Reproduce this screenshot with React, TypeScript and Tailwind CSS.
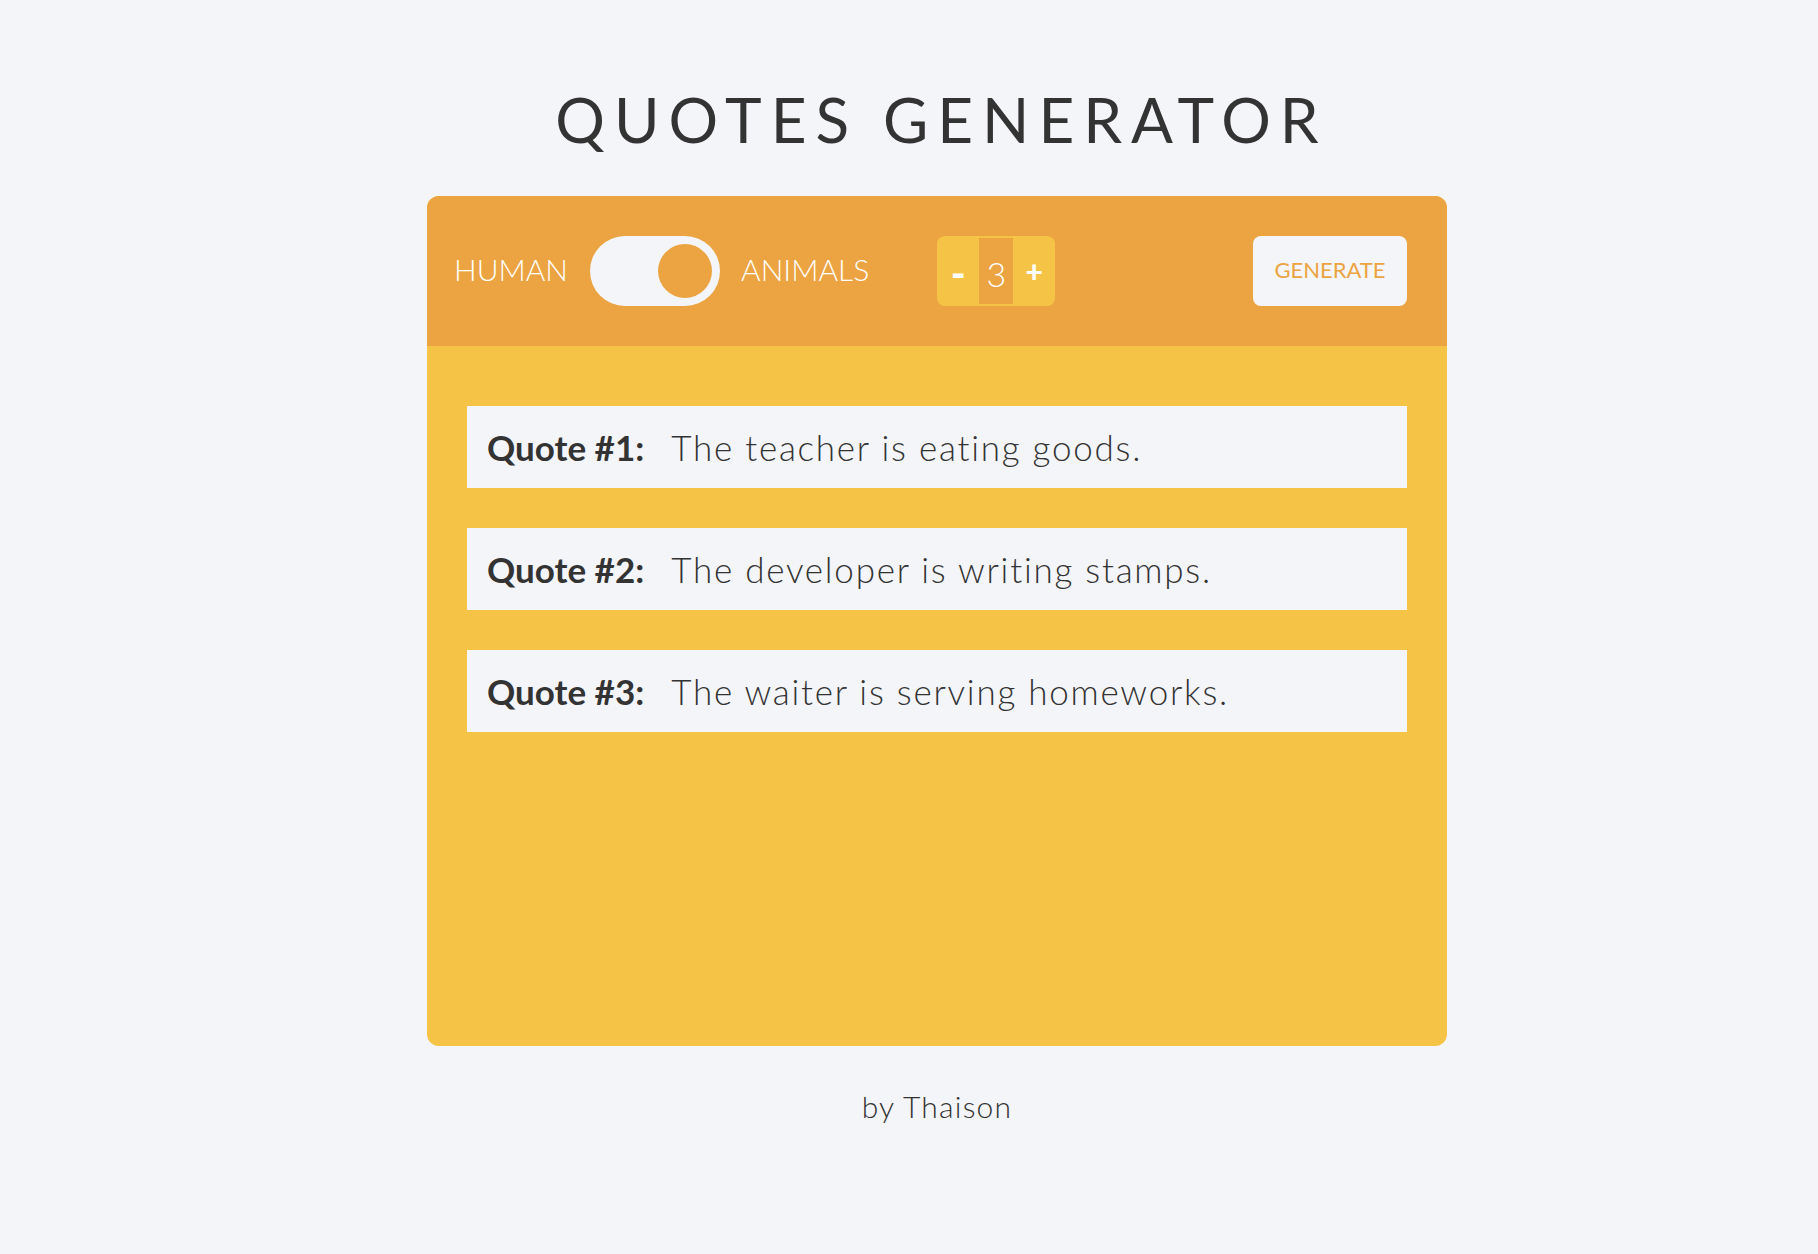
import { useState } from "react";

const quotes = [
  "The teacher is eating goods.",
  "The developer is writing stamps.",
  "The waiter is serving homeworks.",
];

function Toggle({ on, onClick }: { on: boolean; onClick: () => void }) {
  return (
    <button
      onClick={onClick}
      className={`flex h-[70px] w-[130px] items-center rounded-full bg-[#f4f5f9] px-[8px] ${
        on ? "justify-end" : "justify-start"
      }`}
    >
      <span className="block h-[54px] w-[54px] rounded-full bg-[#eba441]" />
    </button>
  );
}

export default function App() {
  const [animals, setAnimals] = useState(true);
  const [count, setCount] = useState(3);

  return (
    <div className="min-h-screen bg-[#f4f5f9] pl-[56px] font-['Lato',sans-serif] text-[#333]">
      <div className="mx-auto flex w-[1020px] flex-col items-center pt-[88px]">
        <h1 className="h-[62px] whitespace-nowrap pl-[0.145em] text-[62px] leading-none font-normal tracking-[0.145em]">
          QUOTES GENERATOR
        </h1>

        <div className="mt-[46px] flex h-[850px] w-full flex-col overflow-hidden rounded-[12px] bg-[#f5c446]">
          <div className="flex h-[150px] items-center bg-[#eba441] pr-[40px] pl-[27px] text-white">
            <span className="mb-[4px] text-[30px] font-light">HUMAN</span>
            <div className="mr-[21px] ml-[22px]">
              <Toggle on={animals} onClick={() => setAnimals(!animals)} />
            </div>
            <span className="mb-[4px] text-[30px] font-light">ANIMALS</span>

            <div className="ml-[68px] flex h-[70px] w-[118px] items-center rounded-[8px] bg-[#f5c446]">
              <button
                onClick={() => setCount(Math.max(1, count - 1))}
                className="flex h-full w-[42px] items-center justify-center pt-[4px] text-[40px] leading-none font-black"
              >
                -
              </button>
              <span className="flex h-[66px] w-[34px] items-center justify-center bg-[#eba441] pt-[4px] text-[34px] font-light">
                {count}
              </span>
              <button
                onClick={() => setCount(count + 1)}
                className="flex h-full w-[42px] items-center justify-center text-[30px] font-black"
              >
                +
              </button>
            </div>

            <button className="ml-auto flex h-[70px] w-[154px] items-center justify-center rounded-[8px] bg-[#f4f5f9] pb-[3px] text-[22px] text-[#eba441]">
              GENERATE
            </button>
          </div>

          <div className="flex flex-col gap-[40px] px-[40px] pt-[60px]">
            {quotes.slice(0, count).map((q, i) => (
              <div
                key={i}
                className="flex h-[82px] items-center bg-[#f4f5f9] pl-[20px] text-[35px] whitespace-nowrap"
              >
                <span className="mr-[27px] font-bold">Quote #{i + 1}:</span>
                <span className="font-light tracking-[0.05em]">{q}</span>
              </div>
            ))}
          </div>
        </div>

        <p className="mt-[38px] text-[30px] font-light tracking-[0.04em]">by Thaison</p>
      </div>
    </div>
  );
}
